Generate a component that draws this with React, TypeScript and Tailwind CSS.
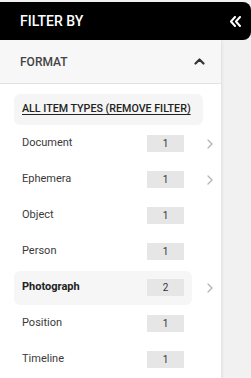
import React from "react";

const rows = [
  { name: "Document", count: 1, chevron: true },
  { name: "Ephemera", count: 1, chevron: true },
  { name: "Object", count: 1, chevron: false },
  { name: "Person", count: 1, chevron: false },
  { name: "Photograph", count: 2, chevron: true, active: true },
  { name: "Position", count: 1, chevron: false },
  { name: "Timeline", count: 1, chevron: false },
];

export default function App() {
  return (
    <div className="w-[251px] h-[378px] bg-[#f1f1f1] overflow-hidden pt-[2px] font-['Roboto',sans-serif]">
      <div className="h-[38px] bg-black rounded-r-lg flex items-center justify-between pl-5 pr-[9px]">
        <span className="text-white font-medium text-[14px]">FILTER BY</span>
        <svg width="13" height="11" viewBox="0 0 13 11" fill="none" stroke="white" strokeWidth="2" strokeLinecap="round" strokeLinejoin="round">
          <polyline points="6,1 2,5.5 6,10" />
          <polyline points="11,1 7,5.5 11,10" />
        </svg>
      </div>
      <div className="w-[221px] h-[340px] bg-white shadow-[1px_0_3px_rgba(0,0,0,0.08)]">
        <div className="h-[44px] bg-[#f7f7f7] border-b border-[#e2e2e2] flex items-center justify-between pl-5 pr-[16px]">
          <span className="text-[#444] font-medium text-[12px]">FORMAT</span>
          <svg width="11" height="7" viewBox="0 0 11 7" fill="none" stroke="#333" strokeWidth="2.2" strokeLinecap="round" strokeLinejoin="round">
            <polyline points="1.5,5.5 5.5,1.5 9.5,5.5" />
          </svg>
        </div>
        <div className="pl-[14px] pt-[10px]">
          <div className="w-[189px] h-[31px] bg-[#f5f5f5] rounded-md flex items-center pl-2">
            <span className="text-[#222] font-medium text-[10.7px] underline underline-offset-2">ALL ITEM TYPES (REMOVE FILTER)</span>
          </div>
          {rows.map((r) => (
            <div key={r.name} className="h-[36px] flex items-center pt-px">
              <div className={`w-[178px] h-[34px] flex items-center pl-2 pr-2 rounded-md ${r.active ? "bg-[#f6f6f6]" : ""}`}>
                <span className={`text-[11px] text-[#3a3a3a] ${r.active ? "font-bold text-[#222]" : ""}`}>{r.name}</span>
                <span className="ml-auto w-[37px] h-[17px] bg-[#e6e6e6] flex items-center justify-center text-[10px] text-[#333]">{r.count}</span>
              </div>
              {r.chevron && (
                <svg className="ml-[15px]" width="6" height="10" viewBox="0 0 6 10" fill="none" stroke="#b5b5b5" strokeWidth="1.3" strokeLinecap="round" strokeLinejoin="round">
                  <polyline points="1,1 5,5 1,9" />
                </svg>
              )}
            </div>
          ))}
        </div>
      </div>
    </div>
  );
}
